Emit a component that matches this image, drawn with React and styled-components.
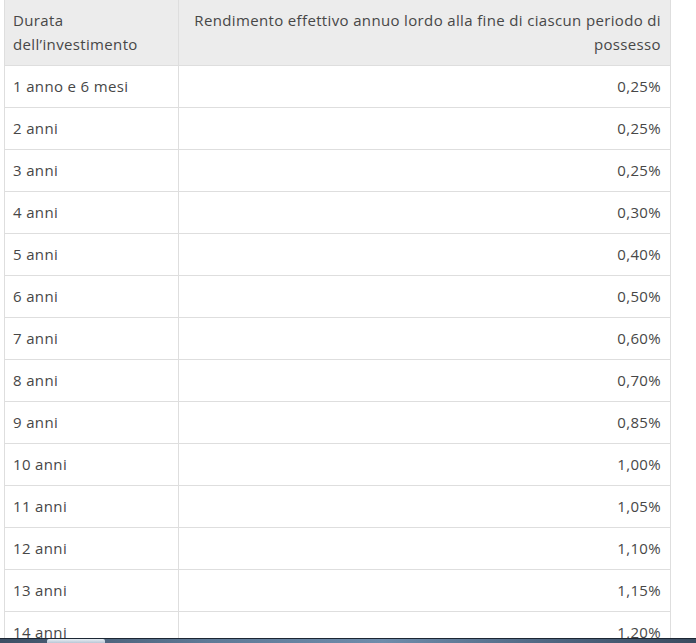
import React from "react";
import styled, { createGlobalStyle } from "styled-components";

const Global = createGlobalStyle`
  html, body { margin: 0; padding: 0; background: #fff; overflow: hidden; }
  body { font-family: "Open Sans", "Noto Sans", sans-serif; }
`;

const Page = styled.div`
  padding: 0 0 0 4px;
  width: 696px;
  height: 643px;
  box-sizing: border-box;
  overflow: hidden;
`;

const Table = styled.table`
  width: 667px;
  border-collapse: collapse;
  table-layout: fixed;
  font-size: 15px;
  letter-spacing: 0.35px;
  color: #474747;
`;

const Col = styled.col`
  width: ${(p) => p.$w || "auto"};
`;

const HeadCell = styled.th`
  background: #ececec;
  font-weight: 400;
  text-align: ${(p) => (p.$right ? "right" : "left")};
  vertical-align: top;
  line-height: 24px;
  padding: 8px 9px 9px 8px;
  border: 1px solid #dedede;
  border-top: none;
`;

const Cell = styled.td`
  text-align: ${(p) => (p.$right ? "right" : "left")};
  line-height: 24px;
  padding: 8px 9px 9px 8px;
  border: 1px solid #dedede;
  white-space: nowrap;
`;

const TaskBar = styled.div`
  position: fixed;
  left: 0;
  right: 0;
  bottom: 0;
  height: 4px;
  border-top: 1px solid #1c2633;
  background: linear-gradient(90deg, #3d4f64 0%, #5f7a97 30%, #6f8cab 55%, #4e6580 80%, #3b4c60 100%);
  display: flex;
`;

const TaskButton = styled.div`
  margin-left: 47px;
  width: 58px;
  height: 100%;
  background: linear-gradient(180deg, #e8eef4, #b9c7d6);
  border-radius: 2px 2px 0 0;
`;

const rows = [
  ["1 anno e 6 mesi", "0,25%"],
  ["2 anni", "0,25%"],
  ["3 anni", "0,25%"],
  ["4 anni", "0,30%"],
  ["5 anni", "0,40%"],
  ["6 anni", "0,50%"],
  ["7 anni", "0,60%"],
  ["8 anni", "0,70%"],
  ["9 anni", "0,85%"],
  ["10 anni", "1,00%"],
  ["11 anni", "1,05%"],
  ["12 anni", "1,10%"],
  ["13 anni", "1,15%"],
  ["14 anni", "1,20%"],
];

export default function App() {
  return (
    <>
      <Global />
      <Page>
        <Table>
          <colgroup>
            <Col $w="174px" />
            <Col />
          </colgroup>
          <thead>
            <tr>
              <HeadCell>Durata dell’investimento</HeadCell>
              <HeadCell $right>
                Rendimento effettivo annuo lordo alla fine di ciascun periodo di possesso
              </HeadCell>
            </tr>
          </thead>
          <tbody>
            {rows.map(([d, r]) => (
              <tr key={d}>
                <Cell>{d}</Cell>
                <Cell $right>{r}</Cell>
              </tr>
            ))}
          </tbody>
        </Table>
      </Page>
      <TaskBar>
        <TaskButton />
      </TaskBar>
    </>
  );
}
